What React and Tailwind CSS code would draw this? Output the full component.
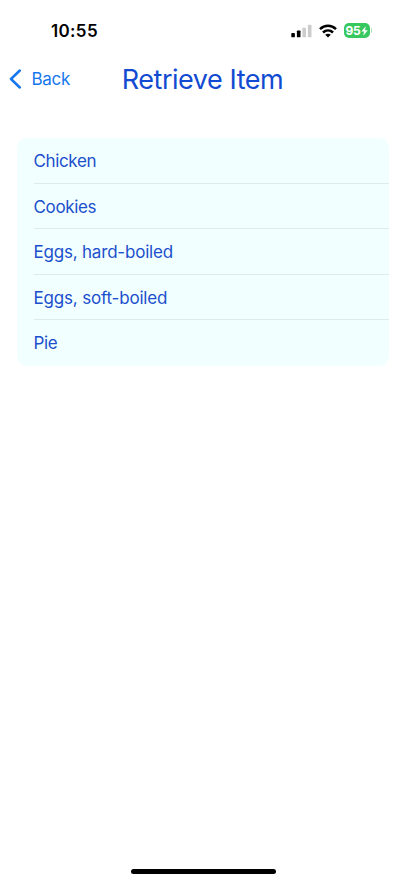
const items = [
  { name: "Chicken", tracking: "tracking-[-0.36px]" },
  { name: "Cookies", tracking: "tracking-[-0.34px]" },
  { name: "Eggs, hard-boiled", tracking: "tracking-[-0.2px]" },
  { name: "Eggs, soft-boiled", tracking: "tracking-[-0.18px]" },
  { name: "Pie", tracking: "tracking-[-0.4px]" },
];

function SignalIcon() {
  return (
    <svg width="21" height="14" viewBox="0 0 21 14" className="block">
      <rect x="0.3" y="9" width="3.6" height="4.3" rx="0.9" fill="#000" />
      <rect x="5.9" y="6.4" width="3.6" height="6.9" rx="0.9" fill="#000" />
      <rect x="11.4" y="3.7" width="3.6" height="9.6" rx="0.9" fill="#ccc" />
      <rect x="16.9" y="0.8" width="3.6" height="12.5" rx="0.9" fill="#ccc" />
    </svg>
  );
}

function WifiIcon() {
  return (
    <svg width="18" height="14" viewBox="0 0 18 14" className="block" fill="none" stroke="#000" strokeWidth="2.6">
      <path d="M1 5.1C5.6 0.7 12.4 0.7 17 5.1" />
      <path d="M4 8.5C6.9 5.8 11.1 5.8 14 8.5" />
      <path d="M9 13.5L6.2 10.7C7.8 9.3 10.2 9.3 11.8 10.7Z" fill="#000" stroke="none" />
    </svg>
  );
}

function Battery() {
  return (
    <div className="flex items-center gap-px">
      <div className="flex h-[15px] w-[26px] items-center justify-center rounded-[5px] bg-[#38c860] text-white">
        <span className="pt-px text-[12px] leading-[14px] font-bold tracking-[-0.2px]">95</span>
        <svg width="7" height="10" viewBox="0 0 7 10" className="block">
          <path d="M4.8 0.3L0.3 5.6H3L2.3 9.7L6.8 4.2H4Z" fill="#fff" />
        </svg>
      </div>
      <div className="h-[5px] w-[1.5px] rounded-r-full bg-[#a5dfb4]" />
    </div>
  );
}

export default function App() {
  return (
    <div className="flex h-[883px] w-[406px] flex-col overflow-hidden bg-white font-['Inter','Liberation_Sans',sans-serif]">
      <header className="flex h-[54px] shrink-0 items-start justify-between pt-[21px] pr-[34px] pl-[51px]">
        <span className="text-[17px] leading-[20px] font-semibold tracking-[0.35px] text-black">10:55</span>
        <div className="flex items-center gap-[7px] pt-[2px]">
          <SignalIcon />
          <WifiIcon />
          <Battery />
        </div>
      </header>
      <nav className="grid h-[50px] shrink-0 grid-cols-[1fr_auto_1fr] items-center pl-[9px] pr-[10px]">
        <button className="flex items-center gap-[9.5px] text-[#1677ee]">
          <svg width="13" height="20" viewBox="0 0 13 20" className="block" fill="none" stroke="currentColor" strokeWidth="2.5" strokeLinecap="round" strokeLinejoin="round">
            <path d="M10.8 1.5L2 10L10.8 18.5" />
          </svg>
          <span className="text-[17px] leading-5 tracking-[-0.3px]">Back</span>
        </button>
        <h1 className="pt-[2px] text-[27px] leading-8 tracking-[-0.45px] whitespace-nowrap text-[#124bd2]">Retrieve Item</h1>
      </nav>
      <main className="flex-1 px-[17px] pt-[34px]">
        <ul className="overflow-hidden rounded-[10px] bg-[#f1ffff] pl-[16.5px] text-[17px] text-[#1c4fcd]">
          {items.map(({ name, tracking }) => (
            <li key={name} className="flex h-[45.6px] items-center border-b border-[#dcebeb] pt-[3px] last:border-b-0 last:pt-[2px]">
              <span className={tracking}>{name}</span>
            </li>
          ))}
        </ul>
      </main>
      <footer className="flex shrink-0 justify-center pb-[9px]">
        <div className="h-[5px] w-[145px] rounded-full bg-black" />
      </footer>
    </div>
  );
}
